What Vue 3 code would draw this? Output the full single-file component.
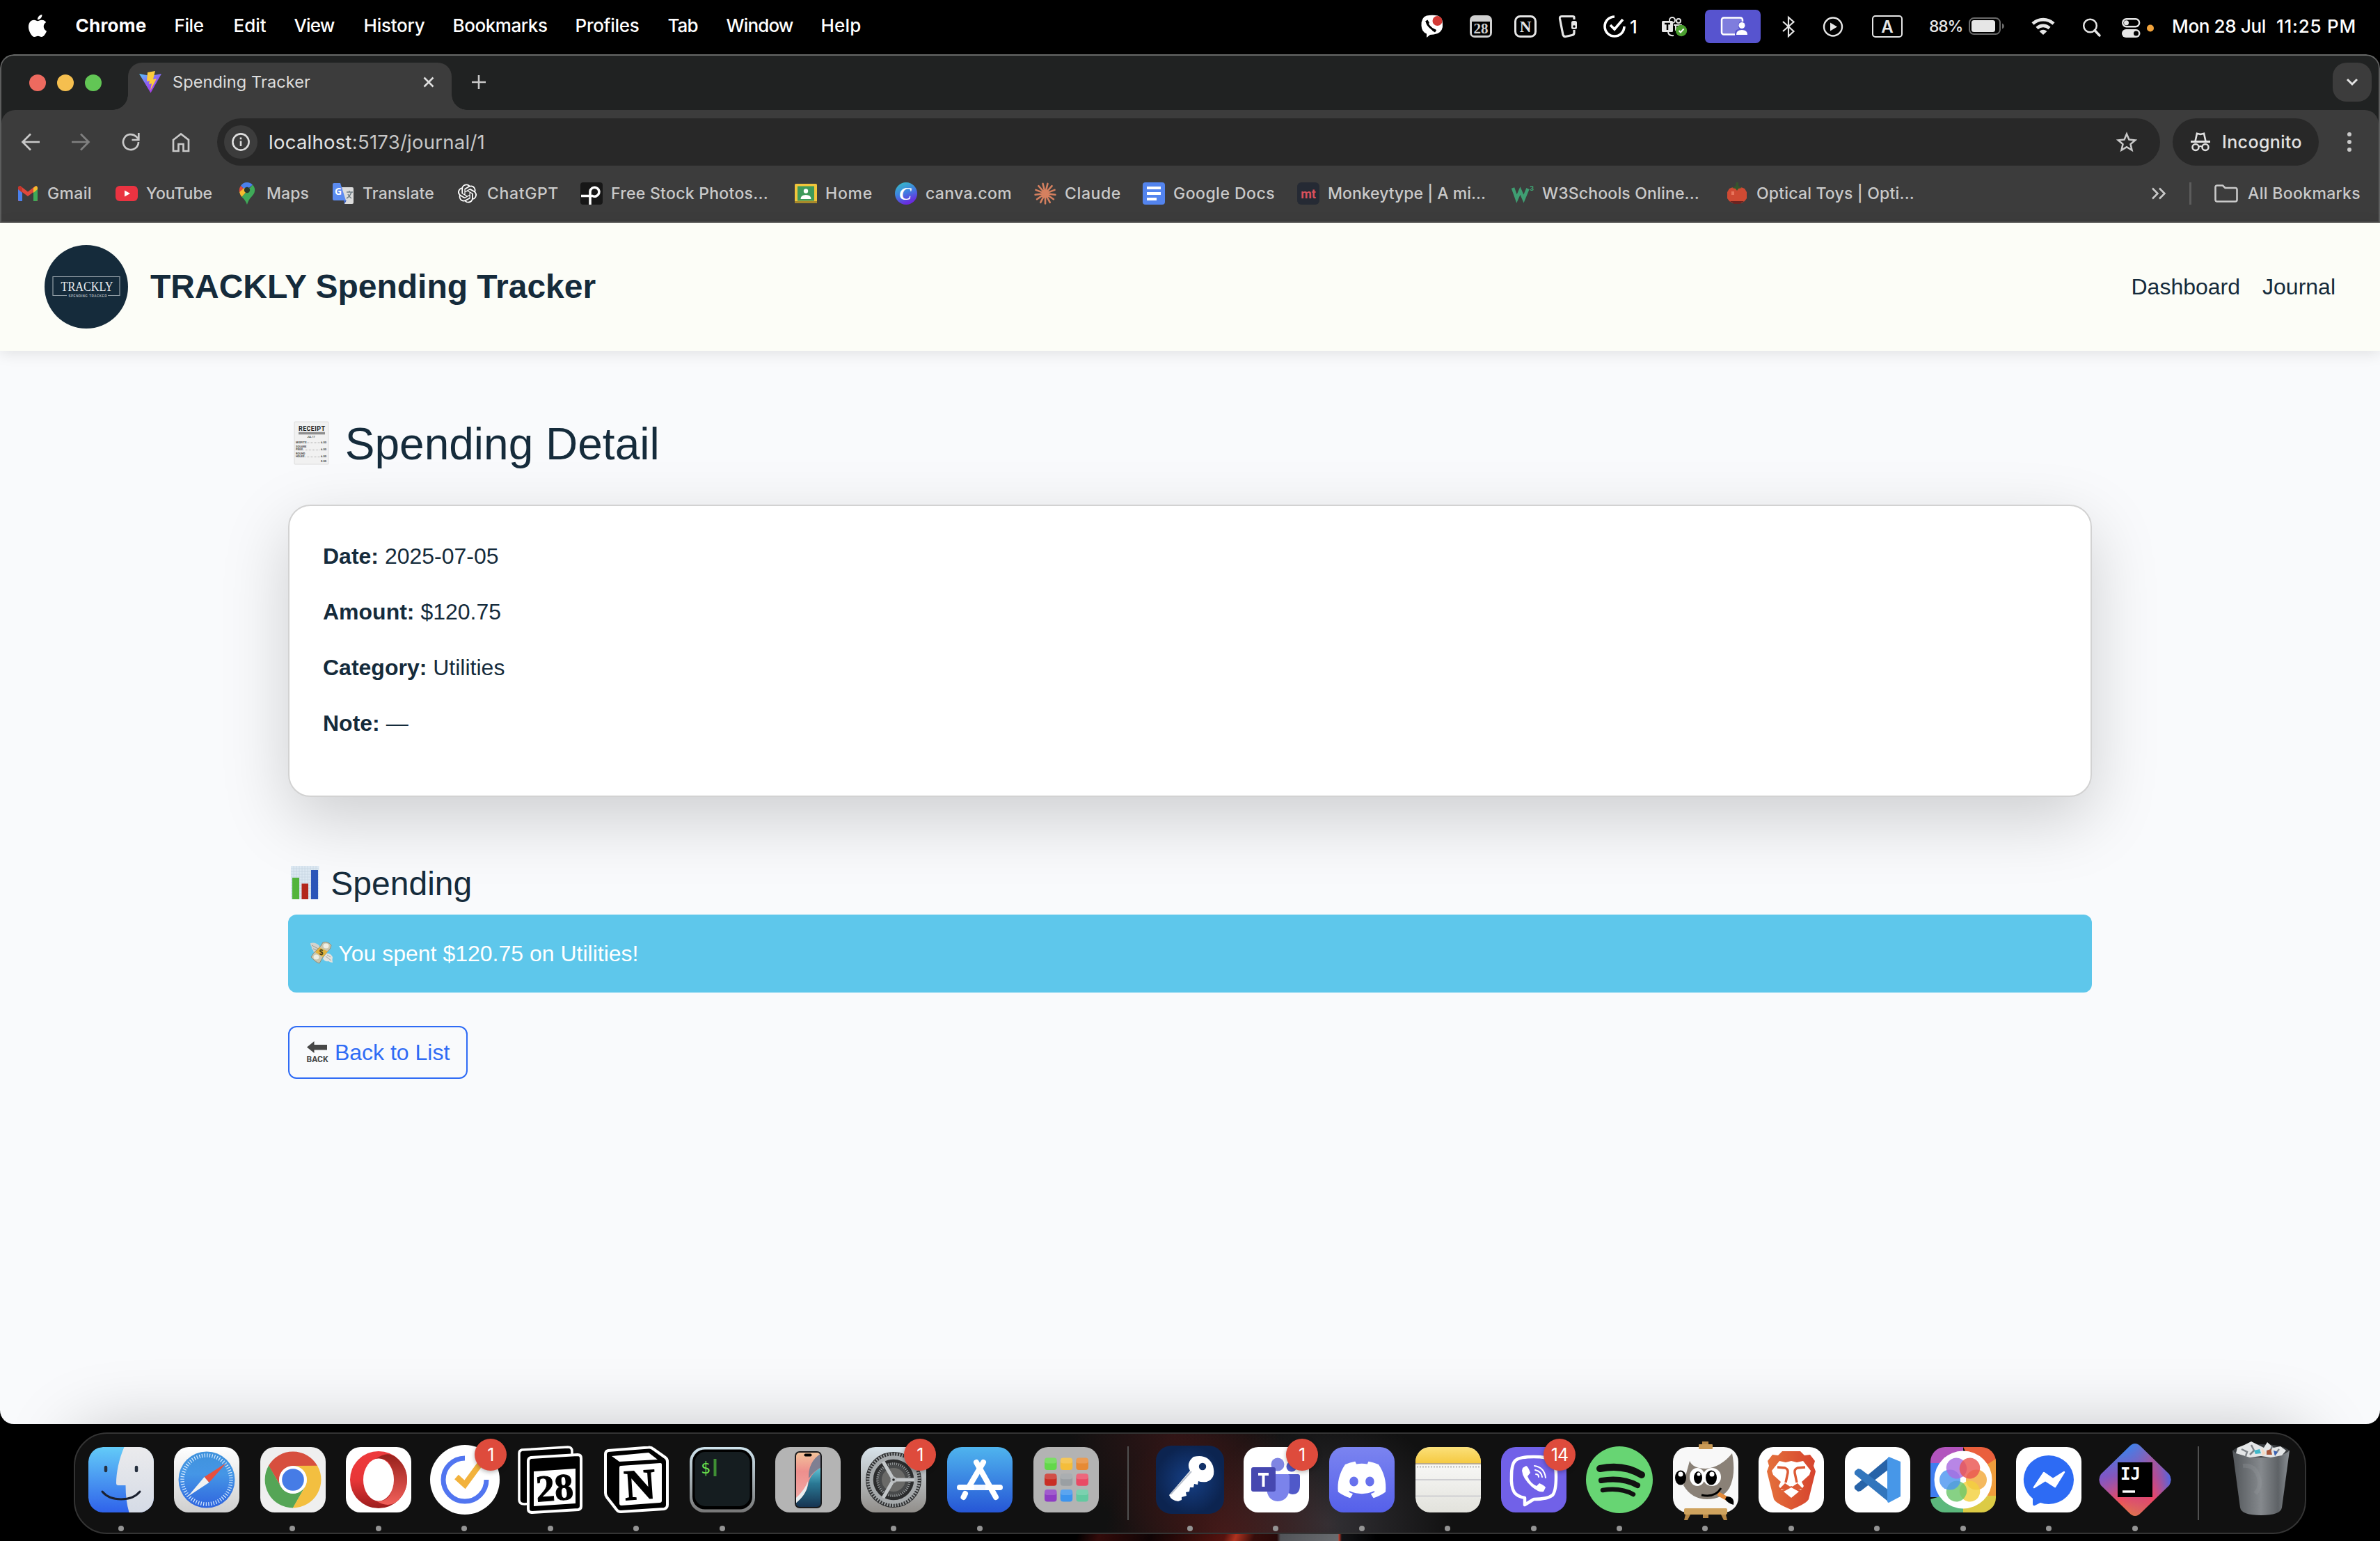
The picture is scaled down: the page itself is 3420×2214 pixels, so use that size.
<script setup>
// Stretches or tightens a label's tracking so that it fills the given width.
const vFit = {
  mounted(el, { value }) {
    const natural = el.getBoundingClientRect().width
    el.style.letterSpacing = (value - natural) / el.textContent.length + 'px'
  },
}

const menus = [
  { label: 'File', slot: 85, width: 42 },
  { label: 'Edit', slot: 87, width: 47 },
  { label: 'View', slot: 100, width: 58 },
  { label: 'History', slot: 128, width: 88 },
  { label: 'Bookmarks', slot: 176, width: 136 },
  { label: 'Profiles', slot: 133, width: 92 },
  { label: 'Tab', slot: 84, width: 43 },
  { label: 'Window', slot: 136, width: 96 },
  { label: 'Help', slot: 80, width: 58 },
]

const status = [
  { id: 'viber', w: 34, art: '<path d="M8 0.5Q16-1 24 0.5Q31 3 31 12Q32 22 24 26Q18 28 13 28L8 32V26.500Q1 24 0.500 15Q0 3 8 0.500Z" fill="#fff"/><path d="M8.500 10Q9 13 13 17Q17 21 20 22" fill="none" stroke="#000" stroke-width="3" stroke-linecap="round"/><path d="M6 8.500L9.500 6.500L12 11L9.500 13zM17 18.500L22 21L20 24.500L16 22z" fill="#000"/><circle cx="23.500" cy="8" r="7" fill="#d33a35"/>' },
  { id: 'cal', w: 32, art: '<rect width="32" height="32" rx="7" fill="#d0d0d0"/><path d="M3 9H29V26Q29 29 26 29H6Q3 29 3 26Z" fill="#000"/><text x="16" y="26" font-family="Liberation Serif, serif" font-weight="700" font-size="21" text-anchor="middle" fill="#d0d0d0">28</text>' },
  { id: 'notion', w: 32, art: '<rect x="1.500" y="1.500" width="29" height="29" rx="7" fill="none" stroke="#e6e6e6" stroke-width="3"/><text x="16" y="24" font-family="Liberation Serif, serif" font-weight="700" font-size="23" text-anchor="middle" fill="#e6e6e6">N</text>' },
  { id: 'wallet', w: 28, art: '<path d="M22 6V3Q22 1.500 20 1.500H4Q1 1.500 1.500 5L6 28Q7 31 10 30.500L19 28.500Q22 28 22 25V21" fill="none" stroke="#e6e6e6" stroke-width="3.200"/><rect x="18" y="8" width="8" height="12" rx="2.500" fill="#e6e6e6"/><circle cx="22" cy="16" r="1.800" fill="#000"/>' },
  { id: 'tick', w: 50, art: '<path d="M16 2A14 14 0 1 0 30 16" fill="none" stroke="#fff" stroke-width="3.600"/><path d="M10 14L16 20L28 6" fill="none" stroke="#fff" stroke-width="3.600"/><text x="38" y="25.500" font-family="Inter, sans-serif" font-weight="500" font-size="26" fill="#fff">1</text>' },
  { id: 'teams', w: 38, art: '<circle cx="15" cy="7" r="4" fill="none" stroke="#e6e6e6" stroke-width="2"/><circle cx="24" cy="8" r="3" fill="none" stroke="#e6e6e6" stroke-width="2"/><path d="M17 14H29M9 24Q10 30 17 29M20 14V22" fill="none" stroke="#e6e6e6" stroke-width="2"/><rect y="8" width="16" height="16" rx="1.500" fill="#e6e6e6"/><path d="M4 12H12M8 12V21" stroke="#000" stroke-width="2.500"/><circle cx="28" cy="22" r="8.200" fill="#4a9e2f"/><path d="M24.500 22L27 24.500L31.500 19.500" fill="none" stroke="#fff" stroke-width="2"/>' },
  { id: 'share', w: 80, art: '<rect y="-8" width="80" height="48" rx="7" fill="#5754cf"/><rect x="24" y="3.500" width="30" height="24" rx="3" fill="#7f7ddd" stroke="#fff" stroke-width="2.500"/><path d="M43 29V25Q44 20 49 20Q46 14 50 9H58V29Z" fill="#5754cf"/><circle cx="53" cy="14.500" r="4.500" fill="#fff"/><path d="M45 28Q45 21 53 21Q61 21 61 28Z" fill="#fff"/>' },
  { id: 'bt', w: 18, art: '<path d="M1 9L16.500 23L9 30V3L16.500 9.500L1 23" fill="none" stroke="#e6e6e6" stroke-width="2.200"/>' },
  { id: 'play', w: 28, art: '<circle cx="14" cy="16.500" r="13" fill="none" stroke="#e6e6e6" stroke-width="2.400"/><path d="M10 10.500L20 16.500L10 22.500Z" fill="#e6e6e6"/>' },
  { id: 'input', w: 44, art: '<rect x="1" y="1" width="42" height="30" rx="4" fill="none" stroke="#e6e6e6" stroke-width="2"/><text x="22" y="25" font-family="Inter, sans-serif" font-weight="600" font-size="24" text-anchor="middle" fill="#e6e6e6">A</text>' },
]

const statusTail = [
  { id: 'wifi', w: 34, art: '<g fill="none" stroke="#e6e6e6" stroke-width="4.600"><path d="M2 12A22 22 0 0 1 32 12"/><path d="M8 18.500A13 13 0 0 1 26 18.500"/></g><path d="M17 28L11.500 23Q17 18.500 22.500 23Z" fill="#e6e6e6"/>' },
  { id: 'search', w: 27, art: '<circle cx="10.500" cy="15" r="9.300" fill="none" stroke="#e6e6e6" stroke-width="2.500"/><path d="M17 21.500L24 29" stroke="#e6e6e6" stroke-width="3.500" stroke-linecap="round"/>' },
  { id: 'cc', w: 48, art: '<rect x="1.200" y="5.200" width="24" height="11" rx="5.500" fill="none" stroke="#e6e6e6" stroke-width="2.400"/><circle cx="6.500" cy="10.700" r="3.500" fill="#e6e6e6"/><rect y="20" width="26.500" height="12" rx="6" fill="#e6e6e6"/><circle cx="20.500" cy="26" r="3.500" fill="#000"/><circle cx="41" cy="18.500" r="5" fill="#f2a33c"/>' },
]

const openai = 'M22.2819 9.8211a5.9847 5.9847 0 0 0-.5157-4.9108 6.0462 6.0462 0 0 0-6.5098-2.9A6.0651 6.0651 0 0 0 4.9807 4.1818a5.9847 5.9847 0 0 0-3.9977 2.9 6.0462 6.0462 0 0 0 .7427 7.0966 5.98 5.98 0 0 0 .511 4.9107 6.051 6.051 0 0 0 6.5146 2.9001A5.9847 5.9847 0 0 0 13.2599 24a6.0557 6.0557 0 0 0 5.7718-4.2058 5.9894 5.9894 0 0 0 3.9977-2.9001 6.0557 6.0557 0 0 0-.7475-7.0729zm-9.022 12.6081a4.4755 4.4755 0 0 1-2.8764-1.0408l.1419-.0804 4.7783-2.7582a.7948.7948 0 0 0 .3927-.6813v-6.7369l2.02 1.1686a.071.071 0 0 1 .038.052v5.5826a4.504 4.504 0 0 1-4.4945 4.4944zm-9.6607-4.1254a4.4708 4.4708 0 0 1-.5346-3.0137l.142.0852 4.783 2.7582a.7712.7712 0 0 0 .7806 0l5.8428-3.3685v2.3324a.0804.0804 0 0 1-.0332.0615L9.74 19.9502a4.4992 4.4992 0 0 1-6.1408-1.6464zM2.3408 7.8956a4.485 4.485 0 0 1 2.3655-1.9728V11.6a.7664.7664 0 0 0 .3879.6765l5.8144 3.3543-2.0201 1.1685a.0757.0757 0 0 1-.071 0l-4.8303-2.7865A4.504 4.504 0 0 1 2.3408 7.872zm16.5963 3.8558L13.1038 8.364 15.1192 7.2a.0757.0757 0 0 1 .071 0l4.8303 2.7913a4.4944 4.4944 0 0 1-.6765 8.1042v-5.6772a.79.79 0 0 0-.407-.667zm2.0107-3.0231l-.142-.0852-4.7735-2.7818a.7759.7759 0 0 0-.7854 0L9.409 9.2297V6.8974a.0662.0662 0 0 1 .0284-.0615l4.8303-2.7866a4.4992 4.4992 0 0 1 6.6802 4.66zM8.3065 12.863l-2.02-1.1638a.0804.0804 0 0 1-.038-.0567V6.0742a4.4992 4.4992 0 0 1 7.3757-3.4537l-.142.0805L8.704 5.459a.7948.7948 0 0 0-.3927.6813zm1.0976-2.3654l2.602-1.4998 2.6069 1.4998v2.9994l-2.5974 1.4997-2.6067-1.4997Z'

const rays = (n, r0, r1, sx, sw, color) => {
  let d = ''
  for (let i = 0; i < n; i++) {
    const a = (i * 2 * Math.PI) / n + 0.12
    d += `M${(Math.cos(a) * r0).toFixed(2)} ${(Math.sin(a) * r0).toFixed(2)}L${(Math.cos(a) * r1).toFixed(2)} ${(Math.sin(a) * r1).toFixed(2)}`
  }
  return `<path transform="translate(${sx} ${sx})" d="${d}" stroke="${color}" stroke-width="${sw}" stroke-linecap="round"/>`
}

// Every bookmark icon is drawn on a 32 x 32 grid.
const bookmarks = [
  { label: 'Gmail', slot: 142, width: 64, art: '<path d="M2 7V27H8V14L16 20L24 14V27H30V7L27 5L16 13.500L5 5Z" fill="#e0483c"/><path d="M2 9V25Q2 27 4 27H8V14Z" fill="#4a80ec"/><path d="M30 9V25Q30 27 28 27H24V14Z" fill="#3faa58"/><path d="M24 8L28 5Q30 6 30 8V10L24 15Z" fill="#f4bd2e"/><path d="M8 8L5 5Q2 5 2 8V10L8 15Z" fill="#c3372c"/>' },
  { label: 'YouTube', slot: 173, width: 95, art: '<rect y="5" width="32" height="22" rx="6" fill="#ea3341"/><path d="M13 11.500L21 16L13 20.500Z" fill="#fff"/>' },
  { label: 'Maps', slot: 138, width: 61, art: '<path d="M16 0A11 11 0 0 0 7 5L14 12L24 3.500A11 11 0 0 0 16 0Z" fill="#4a80ec"/><path d="M7 5Q4 9 5 14L12 10Z" fill="#e0483c"/><path d="M5 14Q6 18 8.500 21L20 8L12 8Z" fill="#f4bd2e"/><path d="M8.500 21Q14 26 16 32Q18 25 23 20Q28 15 27 9Q26.500 6 24 3.500Z" fill="#3faa58"/><circle cx="16" cy="11" r="4.200" fill="#263a2c"/>' },
  { label: 'Translate', slot: 179, width: 103, art: '<path d="M14 7H29Q31 7 31 9V29Q31 31 29 31H18Z" fill="#dcdcdc"/><path d="M17 26L21 26L18 31Z" fill="#3a5fc0"/><path d="M3 1H12L20 26H3Q1 26 1 24V3Q1 1 3 1Z" fill="#5b8bf0"/><path d="M21 14H30M25 12V14M28 14Q26 20 21 23M23 17Q25 21 28 23" fill="none" stroke="#6f7d85" stroke-width="1.500"/><text x="9" y="18" font-family="Open Sans, sans-serif" font-weight="700" font-size="14" text-anchor="middle" fill="#fff">G</text>' },
  { label: 'ChatGPT', slot: 178, width: 103, art: `<path transform="translate(2 2.500) scale(1.130)" d="${openai}" fill="#fff"/>` },
  { label: 'Free Stock Photos...', slot: 308, width: 226, art: '<rect width="32" height="32" rx="4" fill="#171717"/><path d="M14 32V13A6.500 6.500 0 1 1 17.500 19.500H1" fill="none" stroke="#fff" stroke-width="3.600"/>' },
  { label: 'Home', slot: 144, width: 68, art: '<rect y="2" width="32" height="28" rx="1.500" fill="#f1c53b"/><path d="M0 27H32V30H0Z" fill="#a98a2a"/><rect x="4" y="5.500" width="24" height="21" fill="#3f9a5b"/><circle cx="16" cy="12.500" r="3.200" fill="#fff"/><path d="M8.500 24Q8.500 18 16 18Q23.500 18 23.500 24Z" fill="#fff"/>' },
  { label: 'canva.com', slot: 200, width: 124, art: '<circle cx="16" cy="16" r="16" fill="url(#g-canva)"/><text x="15" y="25" font-family="Liberation Serif, serif" font-style="italic" font-weight="700" font-size="26" text-anchor="middle" fill="#fff">C</text>' },
  { label: 'Claude', slot: 156, width: 81, art: rays(13, 1, 14.5, 16, 2.6, '#d5805f') },
  { label: 'Google Docs', slot: 222, width: 146, art: '<rect width="32" height="32" rx="4" fill="#5384ee"/><path d="M6 8H26M6 16H26M6 24H20" stroke="#fff" stroke-width="4"/>' },
  { label: 'Monkeytype | A mi...', slot: 308, width: 227, art: '<rect width="32" height="32" rx="6" fill="#252a34"/><text x="16" y="22.500" font-family="Roboto, sans-serif" font-weight="700" font-size="18" text-anchor="middle" fill="#d9505c">mt</text>' },
  { label: 'W3Schools Online...', slot: 308, width: 226, art: '<path d="M2 8L7.500 23.500L12.500 12L17.500 23.500L23.500 9" fill="none" stroke="#3f9e72" stroke-width="4.600"/><text x="26" y="12" font-family="Inter, sans-serif" font-weight="700" font-size="9.500" fill="#3f9e72">3</text>' },
  { label: 'Optical Toys | Opti...', slot: 300, width: 227, art: '<path d="M10 7H22L27 9L30 14V23L27 27L22 30H10L5 27L2 23V14L5 9Z" fill="#cf4a33"/><path d="M6 27L12 31H20L26 27Z" fill="#6c2320"/><path d="M9 8L14 5L15 0H18L18 5L23 8L18 9L16 12L14 9Z" fill="#35552c"/><path d="M8 13h4v5h-4z" fill="#e8755c"/>' },
]

const discord = 'M20.317 4.3698a19.7913 19.7913 0 00-4.8851-1.5152.0741.0741 0 00-.0785.0371c-.211.3753-.4447.8648-.6083 1.2495-1.8447-.2762-3.68-.2762-5.4868 0-.1636-.3933-.4058-.8742-.6177-1.2495a.077.077 0 00-.0785-.037 19.7363 19.7363 0 00-4.8852 1.515.0699.0699 0 00-.0321.0277C.5334 9.0458-.319 13.5799.0992 18.0578a.0824.0824 0 00.0312.0561c2.0528 1.5076 4.0413 2.4228 5.9929 3.0294a.0777.0777 0 00.0842-.0276c.4616-.6304.8731-1.2952 1.226-1.9942a.076.076 0 00-.0416-.1057c-.6528-.2476-1.2743-.5495-1.8722-.8923a.077.077 0 01-.0076-.1277c.1258-.0943.2517-.1923.3718-.2914a.0743.0743 0 01.0776-.0105c3.9278 1.7933 8.18 1.7933 12.0614 0a.0739.0739 0 01.0785.0095c.1202.099.246.1981.3728.2924a.077.077 0 01-.0066.1276 12.2986 12.2986 0 01-1.873.8914.0766.0766 0 00-.0407.1067c.3604.698.7719 1.3628 1.225 1.9932a.076.076 0 00.0842.0286c1.961-.6067 3.9495-1.5219 6.0023-3.0294a.077.077 0 00.0313-.0552c.5004-5.177-.8382-9.6739-3.5485-13.6604a.061.061 0 00-.0312-.0286zM8.02 15.3312c-1.1825 0-2.1569-1.0857-2.1569-2.419 0-1.3332.9555-2.4189 2.157-2.4189 1.2108 0 2.1757 1.0952 2.1568 2.419 0 1.3332-.9555 2.4189-2.1569 2.4189zm7.9748 0c-1.1825 0-2.1569-1.0857-2.1569-2.419 0-1.3332.9554-2.4189 2.1569-2.4189 1.2108 0 2.1757 1.0952 2.1568 2.419 0 1.3332-.946 2.4189-2.1568 2.4189Z'

// Dock art is drawn around the origin; a tile is 94 units wide.
const tile = (fill, extra = '') => `<rect x="-47" y="-47" width="94" height="94" rx="21" fill="${fill}" ${extra}/>`
const pads = ['#63d84a', '#f4bd3b', '#e78a34', '#c92f24', '#9a9fa3', '#e94a64', '#8e3cc4', '#3c94ee', '#62c9a0']
const petals = ['#f2a93b', '#f3d13e', '#6cc76a', '#4d96f0', '#a86be0', '#ea5650']
const petalAngles = [60 + 30, 150, 210, 270, 330, 30]
const sectorPath = 'M0-20H35.100A40.500 40.500 0 0 0-35.100-20.200L-17.300 10A20 20 0 0 1 0-20Z'

const appsLeft = [
  { id: 'Finder', dot: true, art: '<g clip-path="url(#c-tile)">' + tile('url(#g-finder)') + '<path d="M4.500-47C-3-30-7-10-7 5Q-7 8-4 8H6.500Q6.500 30 11.500 47H48V-48Z" fill="url(#g-finder2)"/></g><path d="M-22-18V-13M22-18V-13" stroke="#26303f" stroke-width="4.500" stroke-linecap="round"/><path d="M-27 17Q-18 28 0 28Q18 28 27 17" fill="none" stroke="#1b2130" stroke-width="3" stroke-linecap="round"/>' },
  { id: 'Safari', art: tile('url(#g-silver)') + '<circle r="40.500" fill="url(#g-safari)"/><circle r="35" fill="none" stroke="#d8ecff" stroke-width="5.500" stroke-dasharray="1.200 2.465"/><path d="M28-24L-3.400-4L3.400 4Z" fill="#e8503f"/><path d="M-27 24L-3.400-4L3.400 4Z" fill="#f2f2f2"/>' },
  { id: 'Chrome', dot: true, art: tile('#efefef') + `<path d="${sectorPath}" fill="#d74f3e"/><path d="${sectorPath}" transform="rotate(-120)" fill="#55a556"/><path d="${sectorPath}" transform="rotate(120)" fill="#f3bf40"/><circle r="19.800" fill="#fff"/><circle r="15.800" fill="#467ce6"/>` },
  { id: 'Opera', dot: true, art: tile('#fff') + '<ellipse rx="41" ry="41" fill="url(#g-opera)"/><path d="M-4-30Q12-42 24-33Q41-20 41 0Q41 20 24 33Q12 40-4 30Q20 34 22 0Q20-34-4-30Z" fill="url(#g-opera2)"/><ellipse rx="22" ry="30.500" fill="#fff"/>' },
  { id: 'TickTick', dot: true, badge: '1', art: '<circle r="50" fill="#fff"/><path d="M0-31A31 31 0 1 0 31 0" fill="none" stroke="#5175f0" stroke-width="7"/><path d="M-12-4L0 7L25-27" fill="none" stroke="#f2b23c" stroke-width="8.500"/>' },
  { id: 'NotionCalendar', dot: true, art: '<g transform="translate(-1 0)"><path d="M-40-43L26-47Q32-47 32-41V28L-36 35Q-44 35-44 29V-38Q-44-42-40-43Z" fill="#000" stroke="#fff" stroke-width="3.500"/><path d="M-27-32L40-36Q45-36 45-31V38Q45 42 41 43L-25 47Q-31 47-31 42V-27Q-31-31-27-32Z" fill="#000" stroke="#fff" stroke-width="4"/><path d="M-23-12L37-16V34L-23 38Z" fill="#fff"/><text transform="rotate(-4)" x="6" y="30" font-family="Liberation Serif, serif" font-weight="700" font-size="54" text-anchor="middle" stroke="#000" stroke-width="1">28</text></g>' },
  { id: 'Notion', dot: true, art: '<g transform="translate(-1 0)"><path d="M-40-42L18-46.500Q22-47 25-44L42-32Q45-30 45-26V36Q45 41 40 42L-22 46Q-26 46-28 43L-42 25Q-44 22-44 19V-37Q-44-41-40-42Z" fill="#000" stroke="#fff" stroke-width="4"/><path d="M-35-34L18-39L31-29L-24-26Z" fill="#fff"/><path d="M-22-20L35-24Q37-24 37-22V30Q37 33 34 33L-21 37Q-24 37-24 34V-17Q-24-20-22-20Z" fill="#fff"/><text transform="rotate(-4)" x="5" y="28" font-family="Liberation Serif, serif" font-weight="700" font-size="62" text-anchor="middle" stroke="#000" stroke-width="1.500">N</text></g>' },
  { id: 'Terminal', dot: true, art: tile('url(#g-term)') + '<rect x="-43" y="-43.500" width="86" height="86" rx="18" fill="#000"/><rect x="-39.500" y="-40" width="79" height="78" rx="15" fill="#151d20"/><text x="-31" y="-9" font-family="DejaVu Sans Mono, monospace" font-size="23" fill="#6be04c">$</text><path d="M-10.500-30V-5" stroke="#3f8f34" stroke-width="4"/>' },
  { id: 'Phone', art: '<g transform="translate(-1 0)">' + tile('#b4b4b4') + '<g clip-path="url(#c-phone)"><rect x="-18" y="-40" width="37" height="80" fill="url(#g-phone)"/><path d="M19-18Q2-8 0 8Q-2 20-18 34V41H20Z" fill="url(#g-phone2)"/><path d="M0 2Q0 20-18 34V27Q-4 14 0 2Z" fill="#e8eef0"/><path d="M19-38Q0-26 1-2Q8-12 19-18Z" fill="#7f7f92"/></g><rect x="-18" y="-40" width="37" height="80" rx="6" fill="none" stroke="#1a1a1c" stroke-width="2"/><rect x="-5.500" y="-37.500" width="11" height="4" rx="2" fill="#000"/></g>' },
  { id: 'Settings', dot: true, badge: '1', art: '<g transform="translate(-1 0)">' + tile('url(#g-set)') + '<circle r="40" fill="#2b2c2d"/><circle r="36.500" fill="none" stroke="#9b9fa1" stroke-width="5" stroke-dasharray="2 1.822"/><circle r="32" fill="none" stroke="#a6aaac" stroke-width="5.500"/><circle r="21" fill="#6a6a68"/><circle r="23" fill="none" stroke="#8c9092" stroke-width="3.500" stroke-dasharray="1.600 1.411"/><circle r="19" fill="none" stroke="#484a4b" stroke-width="4"/><g stroke="#c2c6c8" stroke-width="5"><path d="M0 0H30M0 0L-15-26M0 0L-15 26"/></g><circle r="4.500" fill="#b8bcbe"/><circle r="1.800" fill="#222"/></g>' },
  { id: 'AppStore', dot: true, art: tile('url(#g-app)') + '<g stroke="#fff" stroke-width="8" stroke-linecap="round"><path d="M-29 11H29"/><path d="M-5-25L23 25"/><path d="M5-25L-15 9"/><path d="M-21 20L-23.500 25"/></g><path d="M-8 11H8" stroke="#f4f8ff" stroke-width="8"/>' },
  { id: 'Launchpad', art: tile('#b3b3b3') + pads.map((c, i) => `<rect x="${-31 + (i % 3) * 22.7}" y="${-31.5 + Math.floor(i / 3) * 22.8}" width="17.500" height="17.500" rx="4" fill="${c}"/><rect x="${-31 + (i % 3) * 22.7}" y="${-31.5 + Math.floor(i / 3) * 22.8}" width="17.500" height="8" rx="4" fill="#fff" opacity=".16"/>`).join('') },
]

const appsRight = [
  { id: 'Key', dot: true, art: '<rect x="-49" y="-49" width="98" height="98" rx="22" fill="url(#g-key)"/><path d="M5-33Q26-38 33-20Q38-2 24 3Q16 4 12 2L11 7L6 6L5 11L0 11L-1 17L-6 18L-5 23L-12 25L-12 29L-17 31Q-27 30-30 22L0-13Q-6-24 5-33Z" fill="#fff"/><circle cx="18" cy="-19" r="5.200" fill="#123169"/><path d="M-28 21L2-12" stroke="#b9c0cc" stroke-width="2"/>' },
  { id: 'Teams', dot: true, badge: '1', art: tile('#fff') + '<circle cx="2" cy="-22" r="9.500" fill="#7f85e2"/><circle cx="22" cy="-19" r="7.500" fill="#5059c9"/><path d="M17-8H31Q34-8 34-5V8Q34 21 23 21Q16 20 15 14Z" fill="#5059c9"/><path d="M-14-8H16Q19-8 19-5V12Q18 30 2 31Q-13 30-14 12Z" fill="#7b83eb"/><rect x="-36" y="-18" width="35" height="35" rx="3" fill="#4648b0"/><path d="M-26-8H-11M-18.500-8V10" stroke="#fff" stroke-width="4"/>' },
  { id: 'Discord', dot: true, art: tile('url(#g-discord)') + `<path transform="translate(-34.500 -34.500) scale(2.870)" d="${discord}" fill="#fff"/>` },
  { id: 'Notes', dot: true, art: '<g clip-path="url(#c-tile)">' + tile('url(#g-notes)') + '<path d="M-47-47H47V-23H-47Z" fill="url(#g-notes2)"/><path d="M-47-23H47" stroke="#b9a98a" stroke-width="2"/><path d="M-45-18.500H47" stroke="#b8b8b4" stroke-width="2" stroke-dasharray="2 2"/><path d="M-47 0H47M-47 23.500H47" stroke="#cfcfd2" stroke-width="1.800"/></g>' },
  { id: 'Viber', dot: true, badge: '14', art: tile('#7161e8') + '<path d="M0-33Q20-33 27-28Q32-23 32-4Q32 16 27 22Q20 28 0 28L-13 36V26Q-24 24-28 18Q-33 10-32-6Q-32-23-26-28Q-20-33 0-33Z" fill="none" stroke="#fff" stroke-width="4.500" stroke-linejoin="round"/><path d="M-16-17L-11-20Q-8-19-5-10L-9-5Q-5 5 4 9L8 5Q15 8 17 11L14 17Q8 19-3 10Q-16-2-17-13Z" fill="#fff"/><path d="M1-20Q15-18 17-3M2-14Q11-12 12-4M3-8Q7-8 7-4" fill="none" stroke="#fff" stroke-width="2" stroke-linecap="round"/>' },
  { id: 'Spotify', dot: true, art: '<circle r="48" fill="#67d573"/><g fill="none" stroke="#111" stroke-linecap="round"><path d="M-28-16Q6-23 32-7" stroke-width="10"/><path d="M-26 1Q4-4 26 8" stroke-width="8"/><path d="M-24 15Q2 11 20 21" stroke-width="6.500"/></g>' },
  { id: 'Gimp', dot: true, art: '<path d="M-5-55H4V-44H-5Z" fill="#b58645"/>' + tile('#f8f8f8') + '<rect x="-10" y="-51" width="20" height="7" rx="1" fill="#c99a56"/><path d="M-23-27Q-18-16 0-16Q22-18 38-38Q44-8 34 12Q24 28 2 28Q-20 28-32 8Q-28-10-23-27Z" fill="#8a8177"/><ellipse cx="-36" cy="-3" rx="8" ry="10.500"/><ellipse cx="-12" cy="-4" rx="11" ry="13" fill="#fff"/><ellipse cx="9" cy="-4" rx="13" ry="13" fill="#fff"/><ellipse cx="-11" cy="-3" rx="6" ry="9"/><ellipse cx="8" cy="-3" rx="8" ry="10.500"/><g fill="#fff"><circle cx="-36" cy="-8" r="3.500"/><circle cx="-10" cy="-8" r="2.500"/><circle cx="9" cy="-8" r="3.500"/></g><path d="M-6 22Q14 26 22 12" fill="none" stroke="#000" stroke-width="3"/><path d="M18 20L32 28" stroke="#e48a3a" stroke-width="6"/><path d="M30 24Q42 24 40 36Q32 34 28 28Z"/><rect x="-31" y="41" width="62" height="9" rx="2" fill="#cfa35e"/><path d="M-29 50L-31 58H-26L-22 50ZM29 50L31 58H26L22 50ZM-4 50H4V55H-4Z" fill="#b58645"/>' },
  { id: 'Brave', dot: true, art: tile('#fff') + '<path d="M-13-41H13L19-35L27-36L34-27L32-20L35-12L25 28Q22 34 0 43Q-22 34-25 28L-35-12L-32-20L-34-27L-27-36L-19-35Z" fill="url(#g-brave)"/><path d="M-17-27L-8-25L0-27L8-25L17-27L28-13L26-7L15 3L18 9L14 15L0 9L-14 15L-18 9L-15 3L-26-7L-28-13Z" fill="#fff"/><path d="M-20-18L-9-17Q-4-15-5-10L-8 4M20-18L9-17Q4-15 5-10L8 4" fill="none" stroke="#dd5a34" stroke-width="3.500"/><path d="M-18 14L-9 5L0 11L9 5L18 14L0 13Z" fill="#dd5a34"/><path d="M-11 17L0 11L11 17L0 26Z" fill="#fff"/>' },
  { id: 'VSCode', dot: true, art: tile('#fff') + '<path d="M16-32L-33 9Q-34 12-32 14L-28 17L-24 16L16-15Z" fill="#2763a8"/><path d="M-28-16L-32-13Q-34-11-33-8L16 32V15L-24-15Z" fill="#3276bd"/><path d="M16-33L33-26V24L16 33Q14 33 14 30V-30Z" fill="#4797e8"/>' },
  { id: 'Photos', dot: true, art: '<g clip-path="url(#c-tile)"><rect x="-47" y="-47" width="47" height="24" fill="#b254bd"/><path d="M0-47H47V-22L20-10Z" fill="#ea5f3c"/><path d="M47-30V24H0V0Z" fill="#ef9d3c"/><path d="M-47-24H0V25H-47Z" fill="#3f7df0"/><path d="M-47 28L-20 20H0V47H-47Z" fill="#5cb87c"/><path d="M0 23H47V47H0Z" fill="#dccb45"/></g><circle r="41.500" fill="#fff"/>' + petals.map((c, i) => `<rect x="-14.500" y="-34" width="29" height="30" rx="14.500" fill="${c}" opacity=".82" transform="rotate(${petalAngles[i]})"/>`).join('') + '<circle r="4" fill="#fff"/>' },
  { id: 'Messenger', dot: true, art: '<g transform="translate(-1 0)">' + tile('#fff') + '<path d="M0-35A36 35 0 0 1 0 35Q-7 35-12 33L-20 37Q-23 38-23 34V27A36 35 0 0 1 0-35Z" fill="#2d6bf4"/><path d="M-21 11L-7-10L6-1L22-11L9 10L-5 1Z" fill="#fff" stroke="#fff" stroke-width="2.500" stroke-linejoin="round"/></g>' },
  { id: 'IntelliJ', dot: true, art: '<path d="M-8-48Q0-56 8-48L49-8Q54 0 49 8L8 48Q0 56-8 48L-49 8Q-54 0-49-8Z" fill="url(#g-ij)"/><path d="M-8-48Q0-56 8-48L49-8Q54 0 49 8L8 48Q0 56-8 48L-49 8Q-54 0-49-8Z" fill="url(#g-ij2)"/><rect x="-25" y="-25" width="50" height="50"/><text x="-21" y="0" font-family="DejaVu Sans Mono, monospace" font-weight="700" font-size="24" fill="#fff">IJ</text><path d="M-18 17H0" stroke="#fff" stroke-width="3.400"/>' },
]
</script>

<template>
  <div class="desktop">
    <svg class="defs" width="0" height="0" aria-hidden="true">
      <defs>
        <clipPath id="c-tile"><rect x="-47" y="-47" width="94" height="94" rx="21" /></clipPath>
        <clipPath id="c-phone"><rect x="-18" y="-40" width="37" height="80" rx="6" /></clipPath>
        <linearGradient id="g-canva" x1="0" y1="0" x2=".4" y2="1"><stop offset="0" stop-color="#35c6c4" /><stop offset=".55" stop-color="#3f7fe0" /><stop offset="1" stop-color="#6a2be0" /></linearGradient>
        <linearGradient id="g-vite" x1="0" y1="0" x2=".6" y2="1"><stop offset="0" stop-color="#55c8fb" /><stop offset=".5" stop-color="#8a63f5" /><stop offset="1" stop-color="#a93ae8" /></linearGradient>
        <linearGradient id="g-finder" x1="0" y1="0" x2="0" y2="1"><stop offset="0" stop-color="#63cbf8" /><stop offset="1" stop-color="#2f62ea" /></linearGradient>
        <linearGradient id="g-finder2" x1="0" y1="0" x2="0" y2="1"><stop offset="0" stop-color="#ebebed" /><stop offset="1" stop-color="#d5dbe6" /></linearGradient>
        <linearGradient id="g-silver" x1="0" y1="0" x2="0" y2="1"><stop offset="0" stop-color="#fff" /><stop offset="1" stop-color="#cfcfcf" /></linearGradient>
        <linearGradient id="g-safari" x1="0" y1="0" x2="0" y2="1"><stop offset="0" stop-color="#3f92dc" /><stop offset=".4" stop-color="#4596e6" /><stop offset="1" stop-color="#2f64de" /></linearGradient>
        <linearGradient id="g-opera" x1="0" y1="0" x2="0" y2="1"><stop offset="0" stop-color="#ee3a3c" /><stop offset=".5" stop-color="#e83638" /><stop offset="1" stop-color="#9c1c1c" /></linearGradient>
        <linearGradient id="g-opera2" x1="0" y1="0" x2="0" y2="1"><stop offset="0" stop-color="#97201b" /><stop offset="1" stop-color="#f2605a" /></linearGradient>
        <linearGradient id="g-term" x1="0" y1="0" x2="0" y2="1"><stop offset="0" stop-color="#cfe4ee" /><stop offset="1" stop-color="#777" /></linearGradient>
        <linearGradient id="g-phone" x1="0" y1="0" x2="0" y2="1"><stop offset="0" stop-color="#f3c49a" /><stop offset=".35" stop-color="#ee8f8d" /><stop offset="1" stop-color="#f2b0ac" /></linearGradient>
        <linearGradient id="g-phone2" x1="0" y1="0" x2="0" y2="1"><stop offset="0" stop-color="#62c6d8" /><stop offset=".4" stop-color="#2a7894" /><stop offset="1" stop-color="#16304e" /></linearGradient>
        <linearGradient id="g-set" x1="0" y1="0" x2="0" y2="1"><stop offset="0" stop-color="#d8e3ea" /><stop offset="1" stop-color="#918e8a" /></linearGradient>
        <linearGradient id="g-app" x1="0" y1="0" x2="0" y2="1"><stop offset="0" stop-color="#4fb4ee" /><stop offset="1" stop-color="#2656d6" /></linearGradient>
        <radialGradient id="g-key"><stop offset="0" stop-color="#164087" /><stop offset="1" stop-color="#0c2450" /></radialGradient>
        <linearGradient id="g-discord" x1="0" y1="0" x2="0" y2="1"><stop offset="0" stop-color="#7b84f0" /><stop offset="1" stop-color="#5560ea" /></linearGradient>
        <linearGradient id="g-notes" x1="0" y1="0" x2="0" y2="1"><stop offset="0" stop-color="#fff" /><stop offset="1" stop-color="#e2e2dc" /></linearGradient>
        <linearGradient id="g-notes2" x1="0" y1="0" x2="0" y2="1"><stop offset="0" stop-color="#fbe07a" /><stop offset="1" stop-color="#f5c93f" /></linearGradient>
        <linearGradient id="g-brave" x1="0" y1="0" x2="1" y2="0"><stop offset="0" stop-color="#e4713c" /><stop offset=".5" stop-color="#dd5a34" /><stop offset="1" stop-color="#d6432e" /></linearGradient>
        <linearGradient id="g-ij" x1="0" y1="0" x2="0" y2="1"><stop offset="0" stop-color="#2f8cf5" /><stop offset=".45" stop-color="#8a55b5" /><stop offset=".75" stop-color="#ec4a62" /><stop offset="1" stop-color="#ef7a38" /></linearGradient>
        <linearGradient id="g-ij2" x1="0" y1="0" x2="1" y2="0"><stop offset="0" stop-color="#6a5ce0" stop-opacity=".5" /><stop offset=".3" stop-color="#6a5ce0" stop-opacity="0" /><stop offset=".75" stop-color="#e8406a" stop-opacity=".5" /><stop offset="1" stop-color="#3b6cf0" stop-opacity=".8" /></linearGradient>
        <linearGradient id="g-bin" x1="0" y1="0" x2="1" y2="0"><stop offset="0" stop-color="#52565a" /><stop offset=".5" stop-color="#85898d" /><stop offset=".8" stop-color="#5e6266" /><stop offset="1" stop-color="#8b9095" /></linearGradient>
      </defs>
    </svg>

    <header class="menubar">
      <div class="menus">
        <svg class="apple" viewBox="0 0 24 24"><path fill="#fff" d="M12.152 6.896c-.948 0-2.415-1.078-3.96-1.04-2.04.027-3.910 1.183-4.961 3.014-2.117 3.675-.546 9.103 1.519 12.090 1.013 1.454 2.208 3.090 3.792 3.039 1.520-.065 2.090-.987 3.935-.987 1.831 0 2.350.987 3.960.948 1.637-.026 2.676-1.480 3.676-2.948 1.156-1.688 1.636-3.325 1.662-3.415-.039-.013-3.182-1.221-3.220-4.857-.026-3.040 2.480-4.494 2.597-4.559-1.429-2.090-3.623-2.324-4.390-2.376-2-.156-3.675 1.090-4.610 1.090zM15.530 3.830c.843-1.012 1.400-2.427 1.245-3.830-1.207.052-2.662.805-3.532 1.818-.780.896-1.454 2.338-1.273 3.714 1.338.104 2.715-.688 3.559-1.701" /></svg>
        <div class="menu app"><b v-fit="102">Chrome</b></div>
        <div v-for="m in menus" :key="m.label" class="menu" :style="{ width: m.slot + 'px' }"><span v-fit="m.width">{{ m.label }}</span></div>
      </div>
      <div class="status">
        <svg v-for="s in status" :key="s.id" :width="s.w" height="32" :viewBox="`0 0 ${s.w} 32`" v-html="s.art" />
        <div class="battery">
          <span v-fit="48">88%</span>
          <svg width="52" height="26" viewBox="0 0 52 26"><rect x="1" y="1" width="44" height="23" rx="6.500" fill="none" stroke="#6b6b6b" stroke-width="2" /><rect x="4" y="4" width="34" height="17" rx="3.500" fill="#e6e6e6" /><path d="M48 8.500Q51 10 51 12.500Q51 15 48 16.500Z" fill="#6b6b6b" /></svg>
        </div>
        <svg v-for="s in statusTail" :key="s.id" :width="s.w" height="32" :viewBox="`0 0 ${s.w} 32`" v-html="s.art" />
        <span class="clock"><span v-fit="135">Mon 28 Jul</span></span>
        <span class="clock"><span v-fit="115">11:25 PM</span></span>
      </div>
    </header>

    <div class="window">
      <div class="chrome">
        <div class="tabstrip">
          <div class="lights"><i class="red"></i><i class="yellow"></i><i class="green"></i></div>
          <div class="tab">
            <svg width="32" height="32" viewBox="0 0 32 32"><path d="M0 4L16 7L32 4L16.500 31.500Z" fill="url(#g-vite)" /><path d="M23 0L12 2L11 15L15 14L14 19L18 18L16 28L25 11L20 12Z" fill="#fccb3c" /></svg>
            <span class="title"><span v-fit="198">Spending Tracker</span></span>
            <svg class="close" width="16" height="16" viewBox="0 0 16 16"><path d="M1.500 1.500L14.500 14.500M14.500 1.500L1.500 14.500" stroke="#dedede" stroke-width="2.600" /></svg>
          </div>
          <svg class="plus" width="22" height="22" viewBox="0 0 22 22"><path d="M11 1V21M1 11H21" stroke="#c8c8c8" stroke-width="2.600" /></svg>
          <div class="tabsearch"><svg width="18" height="12" viewBox="0 0 18 12"><path d="M2 2L9 9L16 2" fill="none" stroke="#e2e2e2" stroke-width="3" /></svg></div>
        </div>

        <div class="toolbar">
          <div class="nav">
            <svg viewBox="0 0 28 28"><path d="M27 14H3M14 2.500L2.500 14L14 25.500" fill="none" stroke="#c9c9c9" stroke-width="2.700" /></svg>
            <svg viewBox="0 0 28 28"><path d="M1 14H25M14 2.500L25.500 14L14 25.500" fill="none" stroke="#808080" stroke-width="2.700" /></svg>
            <svg viewBox="0 0 28 28"><path d="M25 14A11 11 0 1 1 21.500 6L25 9.500" fill="none" stroke="#c9c9c9" stroke-width="2.700" /><path d="M25.300 1V11H15.500" fill="none" stroke="#c9c9c9" stroke-width="2.700" /></svg>
            <svg viewBox="0 0 28 28"><path d="M3 11L14 2.500L25 11V27H17.500V17H10.500V27H3Z" fill="none" stroke="#c9c9c9" stroke-width="2.700" /></svg>
          </div>
          <div class="omnibox">
            <span class="info"><svg width="26" height="26" viewBox="0 0 26 26"><circle cx="13" cy="13" r="11.600" fill="none" stroke="#dedede" stroke-width="2.600" /><path d="M13 11.500V19M13 6.500V9.300" stroke="#dedede" stroke-width="2.600" /></svg></span>
            <span class="url"><span v-fit="311">localhost<em>:5173/journal/1</em></span></span>
            <svg class="star" width="30" height="30" viewBox="0 0 30 30"><path d="M15 3.500L18.400 11.600L27.200 12.400L20.500 18.100L22.500 26.700L15 22.100L7.500 26.700L9.500 18.100L2.800 12.400L11.600 11.600Z" fill="none" stroke="#c9c9c9" stroke-width="2.500" /></svg>
          </div>
          <div class="incognito">
            <svg width="30" height="28" viewBox="0 0 30 28"><path d="M7.500 13L10 1.800L15 3L20 1.800L22.500 13" fill="none" stroke="#e2e2e2" stroke-width="2.600" /><path d="M1 13.500H29" stroke="#e2e2e2" stroke-width="3" /><circle cx="8" cy="21.500" r="4.500" fill="none" stroke="#e2e2e2" stroke-width="2.500" /><circle cx="22" cy="21.500" r="4.500" fill="none" stroke="#e2e2e2" stroke-width="2.500" /><path d="M12 21Q15 19 18 21" fill="none" stroke="#e2e2e2" stroke-width="2" /></svg>
            <span v-fit="115">Incognito</span>
          </div>
          <svg class="kebab" width="8" height="28" viewBox="0 0 8 28"><g fill="#c9c9c9"><circle cx="4" cy="3" r="3" /><circle cx="4" cy="14" r="3" /><circle cx="4" cy="25" r="3" /></g></svg>
        </div>

        <div class="bookmarks">
          <div v-for="b in bookmarks" :key="b.label" class="bookmark" :style="{ width: b.slot + 'px' }">
            <svg width="32" height="32" viewBox="0 0 32 32" v-html="b.art" />
            <span v-fit="b.width">{{ b.label }}</span>
          </div>
          <div class="bookmarks-end">
            <svg width="22" height="18" viewBox="0 0 22 18"><path d="M2 1.500L9.500 9L2 16.500M12 1.500L19.500 9L12 16.500" fill="none" stroke="#c9c9c9" stroke-width="2.500" /></svg>
            <i class="rule"></i>
            <svg width="34" height="26" viewBox="0 0 34 26"><path d="M1.500 4Q1.500 1.500 4 1.500H12L15.500 5H30Q32.500 5 32.500 7.500V22Q32.500 24.500 30 24.500H4Q1.500 24.500 1.500 22Z" fill="none" stroke="#c9c9c9" stroke-width="2.600" /></svg>
            <span v-fit="162">All Bookmarks</span>
          </div>
        </div>
      </div>

      <div class="page">
        <nav class="navbar">
          <svg class="logo" viewBox="0 0 120 120">
            <circle cx="60" cy="60" r="60" fill="#152b3b" />
            <path d="M32 72.500H12V45.500H108V72.500H91" fill="none" stroke="#94a0a8" stroke-width="1.200" />
            <text x="61" y="66" font-family="Liberation Serif, serif" font-size="18" textLength="75" lengthAdjust="spacingAndGlyphs" text-anchor="middle" fill="#e6e9eb">TRACKLY</text>
            <text x="62" y="74.500" font-family="Liberation Sans, sans-serif" font-weight="700" font-size="4.600" textLength="55" text-anchor="middle" fill="#aab4ba">SPENDING TRACKER</text>
          </svg>
          <span class="brand">TRACKLY Spending Tracker</span>
          <div class="links"><a>Dashboard</a><a>Journal</a></div>
        </nav>

        <main class="container">
          <h2>
            <svg class="emoji" viewBox="0 0 64 64">
              <rect x="9" y="2" width="49" height="61" rx="1" fill="#f1f1f1" stroke="#dcdcdc" stroke-width="1" />
              <text x="34" y="15" font-family="Roboto, sans-serif" font-weight="700" font-size="9" textLength="38" text-anchor="middle" fill="#222">RECEIPT</text>
              <path d="M15 18.500H53" stroke="#8e8e8e" stroke-width="3.500" />
              <g font-family="Roboto, sans-serif" font-weight="700" font-size="4" fill="#444"><text x="33" y="25" font-size="3.500" text-anchor="middle">JUL 17</text><text x="11" y="32.500">MISFITS</text><text x="47" y="32.500">6.00</text><text x="11" y="39">SQUARE</text><text x="11" y="43">PEGS</text><text x="47" y="43">6.00</text><text x="11" y="49">ROUND</text><text x="11" y="53">HOLES</text><text x="47" y="53">6.00</text><text x="47" y="60">0.00</text></g>
              <path d="M27 32H46M22 42.500H46M25 52.500H46" stroke="#999" stroke-width=".8" stroke-dasharray="1 1" />
            </svg>
            Spending Detail
          </h2>
          <section class="card">
            <p><strong>Date:</strong> 2025-07-05</p>
            <p><strong>Amount:</strong> $120.75</p>
            <p><strong>Category:</strong> Utilities</p>
            <p><strong>Note:</strong> —</p>
          </section>
          <h4>
            <svg class="emoji" viewBox="0 0 48 48">
              <rect x="4" y="0" width="40.500" height="48" fill="#dce8f2" />
              <path d="M8 0V48M12 0V48M16 0V48M20 0V48M24 0V48M28 0V48M32 0V48M36 0V48M40 0V48M4 4H44M4 8H44M4 12H44M4 16H44M4 20H44M4 24H44M4 28H44M4 32H44M4 36H44M4 40H44M4 44H44" stroke="#c6d5e2" stroke-width=".8" />
              <rect x="6" y="17" width="10" height="31" fill="#52b43c" /><rect x="19.500" y="25.500" width="9.500" height="22.500" fill="#b3261c" /><rect x="33" y="6" width="10" height="42" fill="#2a55b8" />
            </svg>
            Spending
          </h4>
          <div class="alert">
            <svg class="emoji" viewBox="0 0 32 32">
              <path d="M0 2Q8 0 13 6L13 15L9 18Q4 16 4 12Q1 10 2 8Q0 5 0 2Z" fill="#d3d3cd" /><path d="M2 5L11 10M4 10L10 13" stroke="#9b9b93" stroke-width="1" />
              <path d="M32 30Q31 26 32 22Q29 16 22 17L18 24Q20 29 26 28Q29 30 32 30Z" fill="#e2e2de" /><path d="M30 27L22 21M29 22L24 19" stroke="#a5a59d" stroke-width="1" />
              <path d="M18 1Q25-1 30 5Q30 10 24 15Q17 22 13 31Q8 30 1 22Q4 16 10 11Q16 6 18 1Z" fill="#c9c6ae" stroke="#8f8c78" stroke-width="1" /><ellipse cx="22.500" cy="6" rx="4" ry="3.500" fill="#efeee4" /><ellipse cx="8.500" cy="22" rx="4" ry="3.500" fill="#efeee4" />
              <path d="M13 8L25 14L18 22L7 15Z" fill="#e2b33e" /><text x="15.500" y="18.500" font-family="Liberation Sans, sans-serif" font-weight="700" font-size="10" text-anchor="middle" fill="#4a3c14">$</text>
            </svg>
            You spent $120.75 on Utilities!
          </div>
          <a class="btn">
            <svg class="emoji" viewBox="0 0 32 32">
              <path d="M1 9.500L11.500 1V6H30V13.500H11.500V18Z" fill="#474747" /><text x="16" y="30.500" font-family="Roboto, sans-serif" font-weight="700" font-size="13.500" textLength="31" lengthAdjust="spacingAndGlyphs" text-anchor="middle" fill="#474747">BACK</text>
            </svg>
            Back to List
          </a>
        </main>
      </div>
    </div>

    <footer class="dock">
      <div v-for="a in appsLeft" :key="a.id" class="app-icon">
        <svg width="124" height="124" viewBox="-62 -62 124 124" v-html="a.art" />
        <b v-if="a.badge" class="badge">{{ a.badge }}</b>
        <i v-if="a.dot" class="dot"></i>
      </div>
      <i class="divider"></i>
      <div v-for="a in appsRight" :key="a.id" class="app-icon">
        <svg width="124" height="124" viewBox="-62 -62 124 124" v-html="a.art" />
        <b v-if="a.badge" class="badge">{{ a.badge }}</b>
        <i v-if="a.dot" class="dot"></i>
      </div>
      <i class="divider last"></i>
      <div class="app-icon">
        <svg width="124" height="124" viewBox="-62 -62 124 124">
          <path d="M-41-42L-30 40Q-28 51 0 51Q28 51 30 40L41-42Z" fill="url(#g-bin)" />
          <path d="M-41-42Q-30-32 0-32Q30-32 41-42Q30-51 0-51Q-30-51-41-42Z" fill="#3a3d40" />
          <path d="M-36-38L-34-46L-24-50L-14-55L-4-50L4-46L9-54L18-46L28-48L36-42L30-35L14-32L0-34L-16-32Z" fill="#e4e6e7" />
          <path d="M-28-44L-20-40L-22-34M-14-50L-10-42L-16-36M16-48L12-38M26-44L20-36" fill="none" stroke="#80858a" stroke-width="2.500" />
          <path d="M-10-42L-2-44L0-38L-8-37Z" fill="#3fb8c8" /><path d="M8-42L14-44L16-36L8-36Z" fill="#a8563a" /><path d="M1-46L7-38L2-34Z" fill="#f5d9c2" /><path d="M18-42L24-40L20-34Z" fill="#3a62b4" />
          <path d="M-26-20Q-10-22-4-6Q2 8-8 20" fill="none" stroke="#9a9fa3" stroke-width="6" opacity=".25" />
        </svg>
      </div>
    </footer>
    <div class="wallpaper"></div>
  </div>
</template>

<style>
html,
body {
  margin: 0;
  background: #000;
}
</style>

<style scoped>
.desktop {
  width: 3420px;
  height: 2214px;
  overflow: hidden;
  background: #000;
  display: flex;
  flex-direction: column;
  font-family: Inter, "Liberation Sans", sans-serif;
}
.desktop :deep(svg) {
  display: block;
  flex: none;
  overflow: visible;
}
.defs {
  height: 0;
}
.menubar {
  height: 78px;
  flex: none;
  display: flex;
  justify-content: space-between;
  color: #fff;
  font-size: 26px;
  font-weight: 500;
  white-space: nowrap;
}
.menus {
  display: flex;
  align-items: center;
  padding: 0 0 5px 38px;
}
.apple {
  width: 32px;
  height: 32px;
  margin-right: 38.500px;
}
.app {
  width: 142px;
}
.app b {
  font-weight: 700;
}
.menu {
  flex: none;
}
.menu > *,
.clock > *,
.title > *,
.url > * {
  display: inline-block;
}
.status {
  width: 1378px;
  height: 74px;
  display: grid;
  align-items: center;
  padding-top: 2px;
  box-sizing: border-box;
  grid-template-columns: 70px 64px 64px 64px 84px 62px 111px 59px 70px 82px 147px 74px 56px 74px 150px 115px;
}
.clock {
  font-weight: 450;
  margin-left: -2px;
  padding-bottom: 2px;
}
.battery {
  display: flex;
  align-items: center;
  gap: 9px;
  color: #e6e6e6;
  font-size: 23px;
}
.window {
  height: 1968px;
  flex: none;
  display: flex;
  flex-direction: column;
  border-radius: 20px;
  overflow: hidden;
}
.chrome {
  height: 242px;
  flex: none;
  box-sizing: border-box;
  border: 2px solid #676968;
  border-left-color: #5c5d5d;
  border-right-color: #5c5d5d;
  border-bottom-color: #4a4a49;
  border-radius: 20px 20px 0 0;
  background: #202222;
  overflow: hidden;
}
.tabstrip {
  height: 78px;
  display: flex;
  align-items: flex-start;
  padding-left: 40px;
}
.lights {
  display: flex;
  gap: 16px;
  padding-top: 27px;
  width: 142px;
}
.lights i {
  width: 24px;
  height: 24px;
  border-radius: 50%;
}
.red {
  background: #ed6a5f;
}
.yellow {
  background: #f5bf4f;
}
.green {
  background: #62c655;
}
.tab {
  position: relative;
  width: 465px;
  height: 68px;
  margin-top: 10px;
  box-sizing: border-box;
  padding: 12px 25.500px 0 16px;
  display: flex;
  align-items: flex-start;
  background: #3c3c3c;
  border-radius: 20px 20px 0 0;
}
.tab::before,
.tab::after {
  content: "";
  position: absolute;
  bottom: 0;
  width: 22px;
  height: 22px;
}
.tab::before {
  left: -22px;
  background: radial-gradient(circle at 0 0, transparent 21.500px, #3c3c3c 22px);
}
.tab::after {
  right: -22px;
  background: radial-gradient(circle at 100% 0, transparent 21.500px, #3c3c3c 22px);
}
.title {
  flex: 1;
  margin-left: 16px;
  font-size: 23.500px;
  line-height: 32px;
  white-space: nowrap;
  color: #dedede;
}
.close {
  margin-top: 8px;
}
.plus {
  margin: 27px 0 0 28px;
}
.tabsearch {
  width: 56px;
  height: 56px;
  margin: 10px 10px 0 auto;
  border-radius: 20px;
  background: #3c3c3c;
  display: grid;
  place-items: center;
}
.toolbar {
  height: 92px;
  display: flex;
  align-items: center;
  background: #3c3c3c;
  border-radius: 20px 20px 0 0;
}
.nav {
  width: 310px;
  display: flex;
  gap: 44px;
  padding-left: 28px;
  box-sizing: border-box;
}
.nav svg {
  width: 28px;
  height: 28px;
}
.omnibox {
  width: 2792px;
  height: 68px;
  border-radius: 34px;
  background: #282828;
  display: flex;
  align-items: center;
  box-sizing: border-box;
  padding: 0 33px 0 10px;
}
.info {
  width: 48px;
  height: 48px;
  border-radius: 50%;
  background: #3c3c3c;
  display: grid;
  place-items: center;
}
.url {
  flex: 1;
  margin-left: 16px;
  font-size: 27.500px;
  color: #e3e3e3;
  white-space: nowrap;
}
.url em {
  font-style: normal;
  color: #c6c6c6;
}
.incognito {
  width: 210px;
  height: 68px;
  margin-left: 18px;
  border-radius: 34px;
  background: #282828;
  display: flex;
  align-items: center;
  box-sizing: border-box;
  padding-left: 25px;
  gap: 16px;
  font-size: 25px;
  font-weight: 500;
  color: #e2e2e2;
}
.kebab {
  margin-left: 40px;
}
.bookmarks {
  height: 68px;
  box-sizing: border-box;
  display: flex;
  align-items: center;
  padding: 0 0 12px 22px;
  background: #3c3c3c;
  color: #c9c9c9;
  font-size: 23px;
  font-weight: 450;
  white-space: nowrap;
}
.bookmark {
  flex: none;
  display: flex;
  align-items: center;
  gap: 12px;
}
.bookmarks-end {
  margin-left: auto;
  padding-right: 26px;
  display: flex;
  align-items: center;
}
.rule {
  width: 3px;
  height: 32px;
  margin: 0 33px 0 33px;
  background: #5c5c5c;
}
.bookmarks-end span {
  margin-left: 14px;
}
.page {
  flex: 1;
  background: #f9fafc;
  color: #152b3b;
  font-family: "Liberation Sans", Arial, sans-serif;
  font-size: 32px;
  line-height: 48px;
}
.navbar {
  height: 184px;
  box-sizing: border-box;
  padding: 0 64px;
  display: flex;
  align-items: center;
  background: #fcfdf7;
  box-shadow: 0 4px 20px rgba(0, 0, 0, 0.1);
}
.logo {
  width: 120px;
  height: 120px;
}
.brand {
  margin-left: 32px;
  font-size: 48px;
  font-weight: 700;
}
.links {
  margin-left: auto;
  display: flex;
  gap: 32px;
}
.container {
  width: 2592px;
  margin: 0 auto;
  padding-top: 96px;
}
.emoji {
  width: 1em;
  height: 1em;
}
.container .emoji {
  display: inline-block;
  vertical-align: -0.125em;
}
h2,
h4 {
  font-weight: 400;
  line-height: 1.2;
  margin: 0;
}
h2 {
  font-size: 64px;
  margin-bottom: 48px;
}
.card {
  box-sizing: border-box;
  border: 2px solid #d2d2d2;
  border-radius: 32px;
  padding: 48px;
  margin-bottom: 96px;
  background: #fff;
  box-shadow: 0 32px 96px rgba(0, 0, 0, 0.175);
}
p {
  margin: 0 0 32px;
}
h4 {
  font-size: 48px;
  margin-bottom: 16px;
}
.alert {
  padding: 32px;
  border-radius: 12px;
  margin-bottom: 48px;
  background: #5ec7eb;
  color: #fff;
}
.btn {
  display: inline-block;
  padding: 12px 24px;
  border: 2px solid #2f6bf5;
  border-radius: 12px;
  color: #2f6bf5;
}
.dock {
  flex: none;
  width: 3208px;
  height: 146px;
  box-sizing: border-box;
  margin: 12px auto 0;
  padding-left: 4px;
  position: relative;
  border: 2px solid #343434;
  border-radius: 48px;
  display: flex;
  align-items: flex-start;
  background:
    radial-gradient(170px 170px at 1650px 150px, rgba(110, 30, 28, 0.55), transparent),
    radial-gradient(150px 150px at 1580px 0, rgba(70, 24, 26, 0.6), transparent),
    radial-gradient(180px 160px at 1800px 130px, rgba(90, 86, 96, 0.45), transparent),
    #111;
  box-shadow: 0 0 100px rgba(0, 0, 0, 0.25);
}
.app-icon {
  position: relative;
  flex: none;
  width: 123.450px;
  height: 142px;
  padding-top: 4px;
  box-sizing: border-box;
}
.badge {
  position: absolute;
  left: 76px;
  top: 7px;
  width: 46px;
  height: 46px;
  border-radius: 50%;
  background: #de4b3c;
  color: #fff;
  font-size: 25px;
  font-weight: 400;
  line-height: 46px;
  text-align: center;
  letter-spacing: -1px;
  box-shadow: 0 2px 6px rgba(0, 0, 0, 0.3);
}
.dot {
  position: absolute;
  left: 57.500px;
  bottom: 2px;
  width: 8px;
  height: 8px;
  border-radius: 50%;
  background: #949494;
}
.divider {
  flex: none;
  width: 2px;
  height: 106px;
  margin: 18px 26.500px 0;
  background: #505050;
}
.last {
  margin-left: 28.500px;
}
.wallpaper {
  flex: 1;
  margin: 0 1300px 0 1080px;
  background:
    linear-gradient(90deg, transparent 755px, #5c5f64 760px, #777a7e 843px, #e0402c 844px, #15161a 848px, transparent 900px),
    linear-gradient(110deg, transparent 440px, #3a0d0c 470px, #120506 540px, #611611 640px, #c63a24 655px, #3d0f0d 680px, #180708 755px, transparent 760px);
}
</style>
